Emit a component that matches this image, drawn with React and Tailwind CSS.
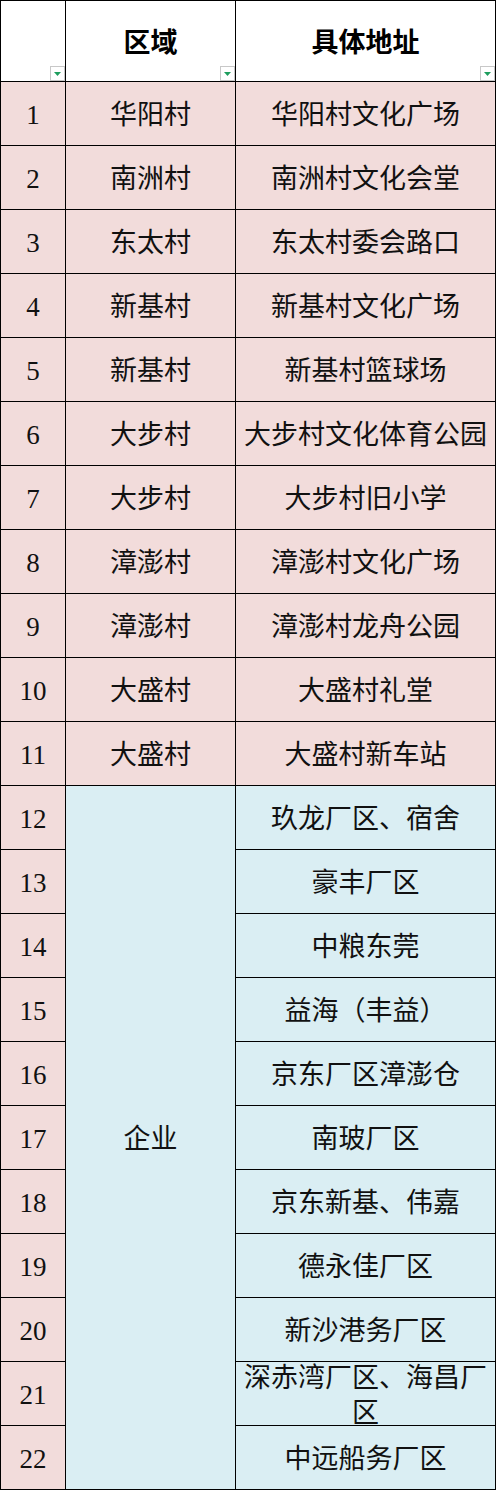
import React from "react";

const villages = [
  ["1", "华阳村", "华阳村文化广场"],
  ["2", "南洲村", "南洲村文化会堂"],
  ["3", "东太村", "东太村委会路口"],
  ["4", "新基村", "新基村文化广场"],
  ["5", "新基村", "新基村篮球场"],
  ["6", "大步村", "大步村文化体育公园"],
  ["7", "大步村", "大步村旧小学"],
  ["8", "漳澎村", "漳澎村文化广场"],
  ["9", "漳澎村", "漳澎村龙舟公园"],
  ["10", "大盛村", "大盛村礼堂"],
  ["11", "大盛村", "大盛村新车站"],
];

const companies = [
  ["12", "玖龙厂区、宿舍"],
  ["13", "豪丰厂区"],
  ["14", "中粮东莞"],
  ["15", "益海（丰益）"],
  ["16", "京东厂区漳澎仓"],
  ["17", "南玻厂区"],
  ["18", "京东新基、伟嘉"],
  ["19", "德永佳厂区"],
  ["20", "新沙港务厂区"],
  ["21", "深赤湾厂区、海昌厂区"],
  ["22", "中远船务厂区"],
];

function FilterButton() {
  return (
    <span className="absolute right-0 bottom-0 w-[15px] h-[15px] bg-white border border-[#c8c8c8] flex items-center justify-center">
      <svg width="7" height="4" viewBox="0 0 7 4">
        <polygon points="0,0 7,0 3.5,4" fill="#1e9e5e" />
      </svg>
    </span>
  );
}

function Cell({ children, className = "" }) {
  return (
    <div className={`flex items-center justify-center text-center overflow-hidden leading-[35px] pt-[4px] text-[#111] ${className}`}>
      {children}
    </div>
  );
}

export default function App() {
  const font = { fontFamily: '"Liberation Serif", "Noto Sans CJK SC", serif' };
  return (
    <div className="bg-white w-[496px] h-[1491px]" style={font}>
      <div className="grid grid-cols-[64px_169px_259px] grid-rows-[80px_repeat(22,63px)] gap-px bg-black p-px w-[496px] text-[27px]">
        <div className="relative bg-white">
          <FilterButton />
        </div>
        <div className="relative bg-white flex items-center justify-center pt-[4px] font-bold text-black text-[27px]">
          区域
          <FilterButton />
        </div>
        <div className="relative bg-white flex items-center justify-center pt-[4px] font-bold text-black text-[27px]">
          具体地址
          <FilterButton />
        </div>

        {villages.map(([n, area, addr]) => (
          <React.Fragment key={n}>
            <Cell className="bg-[#f2dcdb]">{n}</Cell>
            <Cell className="bg-[#f2dcdb]">{area}</Cell>
            <Cell className="bg-[#f2dcdb]">{addr}</Cell>
          </React.Fragment>
        ))}

        {companies.map(([n, addr], i) => (
          <React.Fragment key={n}>
            <Cell className="bg-[#f2dcdb]">{n}</Cell>
            {i === 0 && (
              <Cell className="bg-[#daeef3] row-span-11">企业</Cell>
            )}
            <Cell className="bg-[#daeef3] px-[8px]">{addr}</Cell>
          </React.Fragment>
        ))}
      </div>
    </div>
  );
}
